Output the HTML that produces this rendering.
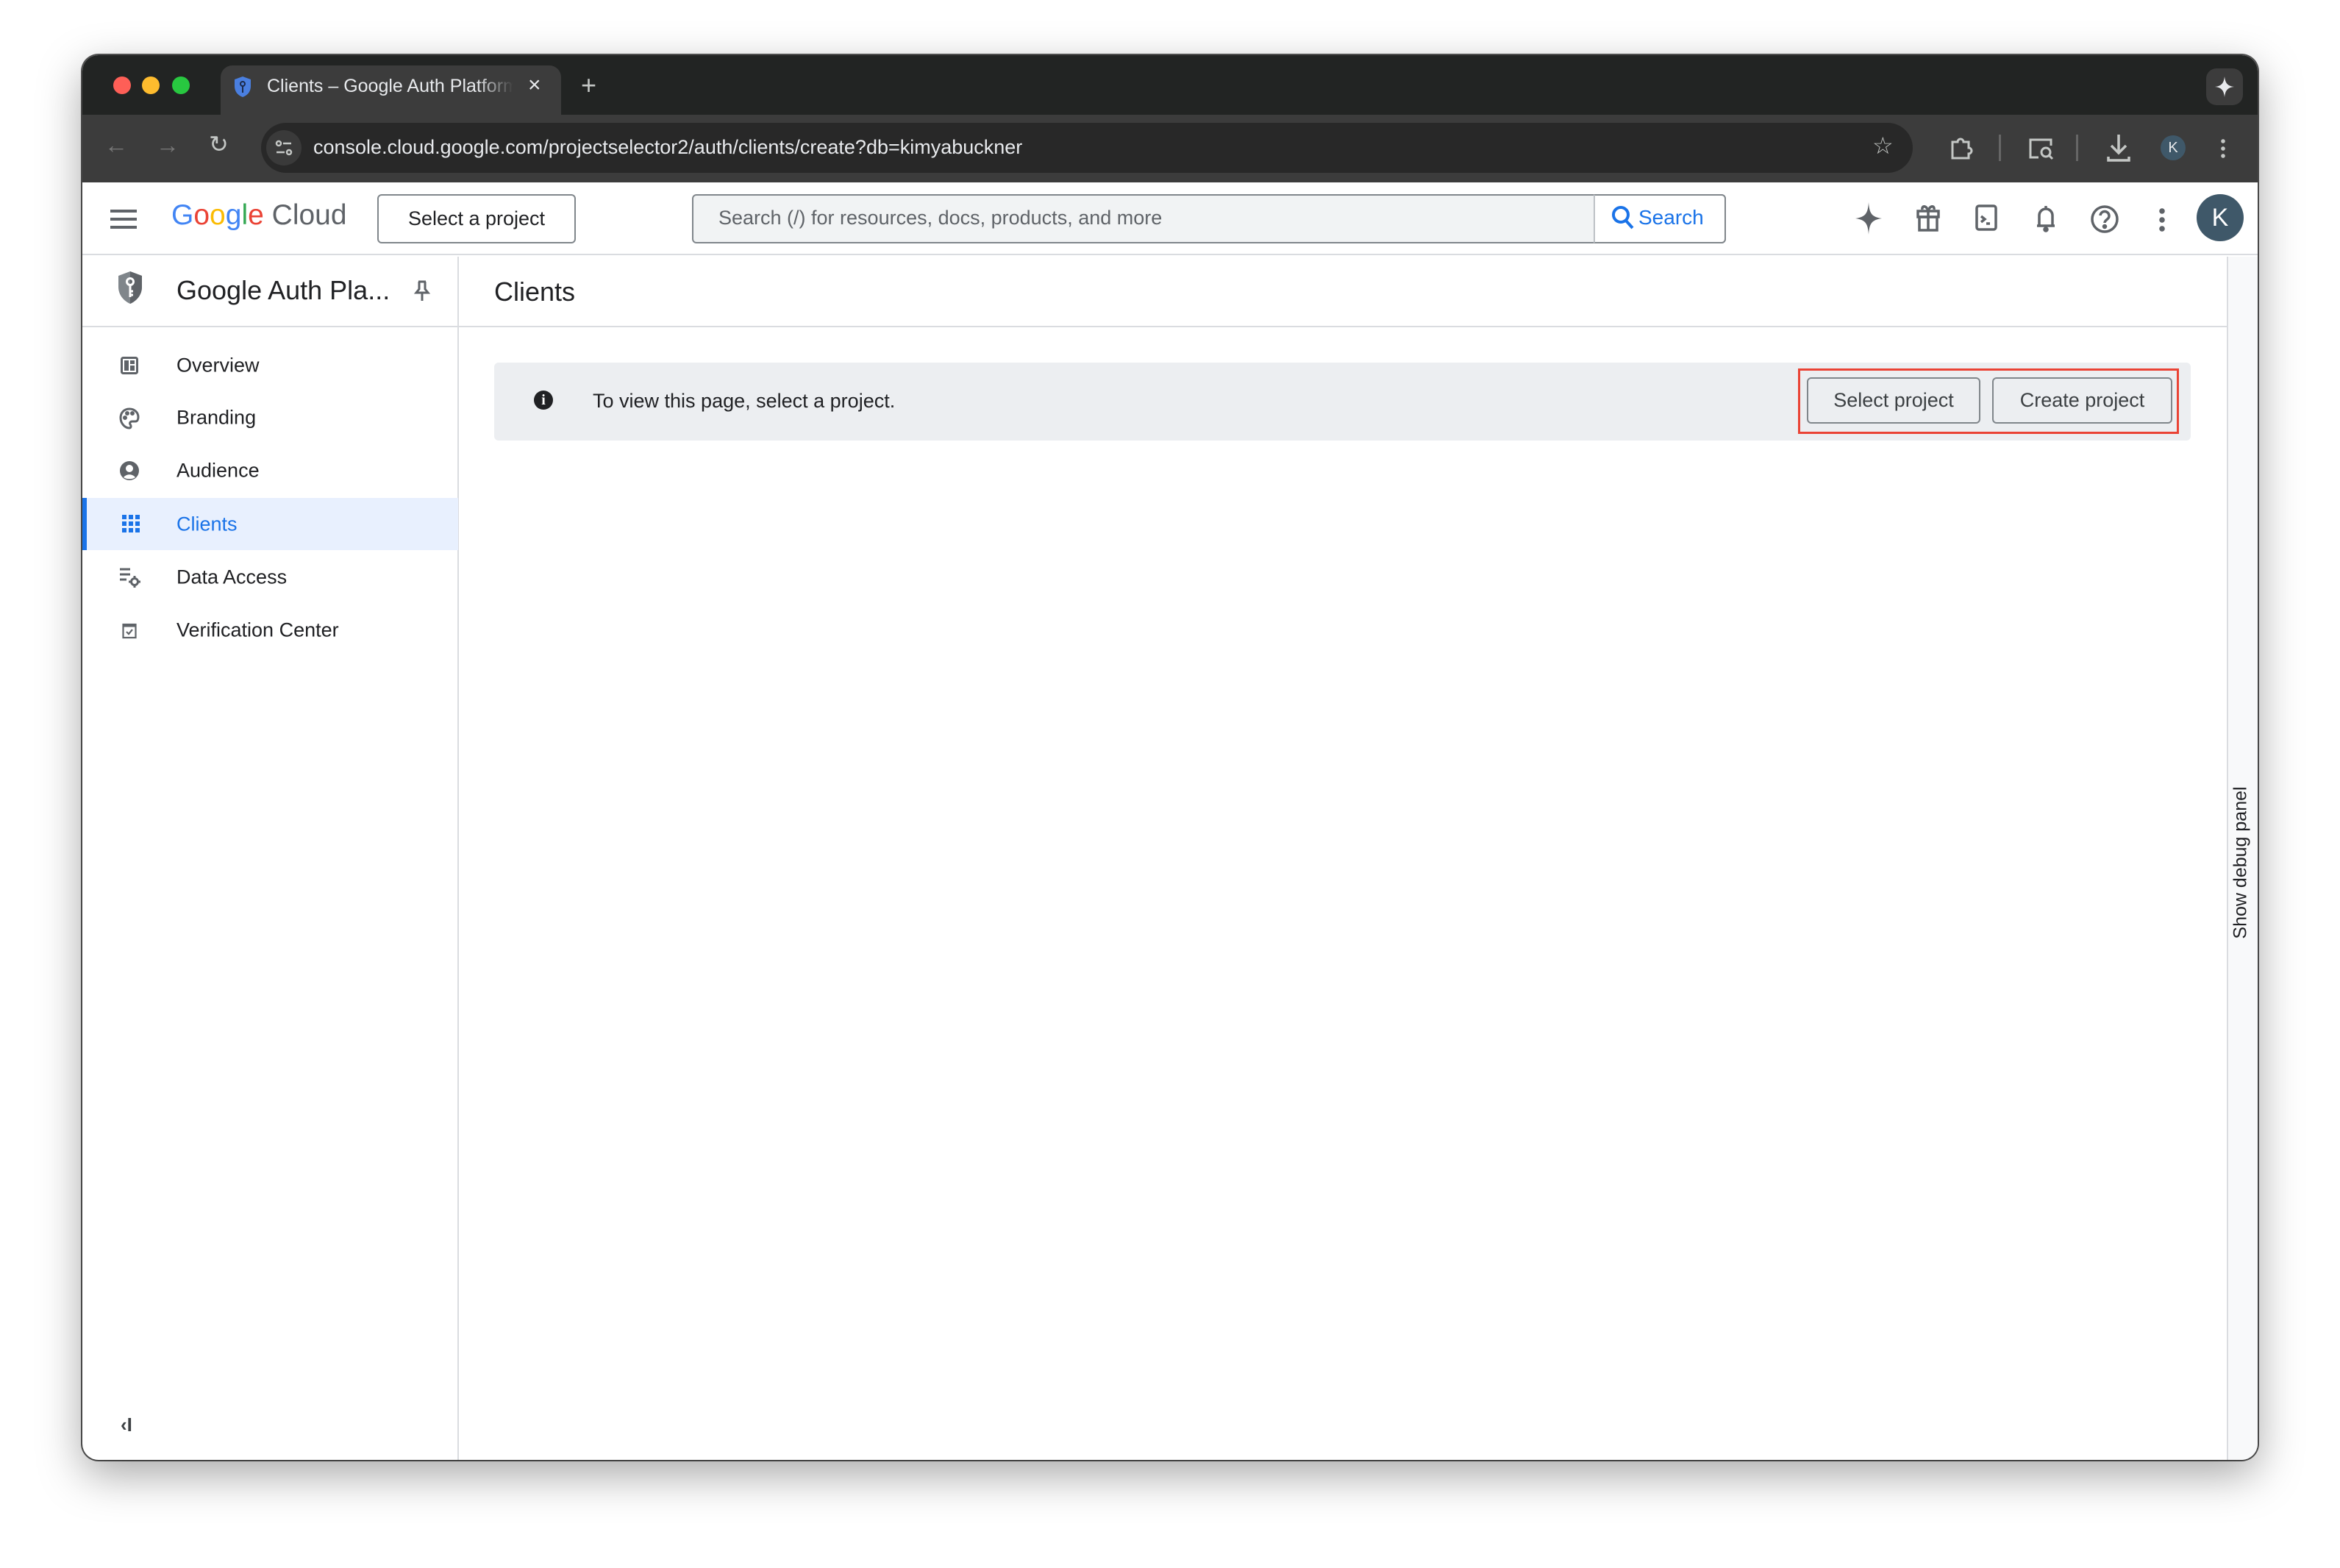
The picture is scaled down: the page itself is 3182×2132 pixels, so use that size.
<!DOCTYPE html>
<html><head><meta charset="utf-8"><style>
*{box-sizing:border-box;margin:0;padding:0}
body{width:3182px;height:2132px;background:#fff;font-family:"Liberation Sans",Arial,sans-serif;position:relative;overflow:hidden}
.abs{position:absolute}
.win{left:112px;top:75px;width:2958px;height:1910px;border-radius:22px;overflow:hidden;background:#fff;box-shadow:0 20px 60px rgba(0,0,0,.35),0 0 0 2px #555}
.t{white-space:nowrap}
svg{position:absolute;overflow:visible}
.nav{left:0;width:511px;height:71px}
.nav span{position:absolute;left:128px;top:50%;transform:translateY(-50%);font-size:27px;color:#202124}
</style></head><body>
<div class="abs win">
  <div class="abs" style="left:0;top:0;width:2958px;height:81px;background:#222423"></div>
  <div class="abs" style="left:42px;top:29px;width:24px;height:24px;border-radius:50%;background:#fe5f57"></div>
  <div class="abs" style="left:81px;top:29px;width:24px;height:24px;border-radius:50%;background:#febc2e"></div>
  <div class="abs" style="left:122px;top:29px;width:24px;height:24px;border-radius:50%;background:#28c840"></div>
  <div class="abs" style="left:188px;top:14px;width:463px;height:70px;background:#3c3c3c;border-radius:16px 16px 0 0"></div>
  <svg style="left:206px;top:28px" width="24" height="30" viewBox="0 0 24 30"><path d="M12 1 L23 5 V14 C23 22 18 27 12 29 C6 27 1 22 1 14 V5Z" fill="#4a7fe0"/><circle cx="12" cy="11" r="3" fill="none" stroke="#1c2a4a" stroke-width="2"/><path d="M12 14v9" stroke="#1c2a4a" stroke-width="2"/></svg>
  <div class="abs t" style="left:251px;top:28px;font-size:25px;color:#e8eaed;width:335px;overflow:hidden;-webkit-mask:linear-gradient(90deg,#000 85%,transparent)">Clients – Google Auth Platform</div>
  <div class="abs t" style="left:606px;top:24px;font-size:30px;color:#e8eaed">×</div>
  <div class="abs t" style="left:678px;top:20px;font-size:36px;color:#c4c7c5">+</div>
  <div class="abs" style="left:2888px;top:18px;width:50px;height:50px;border-radius:14px;background:#3c3c3c"></div>
  <svg style="left:2900px;top:29px" width="26" height="28" viewBox="0 0 26 28"><path d="M13 0 C14 9 17 13 26 14 C17 15 14 19 13 28 C12 19 9 15 0 14 C9 13 12 9 13 0Z" fill="#e8eaed"/></svg>
  <div class="abs" style="left:0;top:81px;width:2958px;height:92px;background:#3c3c3c"></div>
  <div class="abs t" style="left:30px;top:104px;font-size:32px;color:#777">←</div>
  <div class="abs t" style="left:100px;top:104px;font-size:32px;color:#777">→</div>
  <div class="abs t" style="left:172px;top:102px;font-size:32px;color:#c4c7c5">↻</div>
  <div class="abs" style="left:243px;top:92px;width:2246px;height:68px;border-radius:34px;background:#282828"></div>
  <div class="abs" style="left:250px;top:102px;width:48px;height:48px;border-radius:50%;background:#3a3a3a"></div>
  <svg style="left:262px;top:114px" width="24" height="24" viewBox="0 0 24 24" fill="none" stroke="#c4c7c5" stroke-width="2.5"><circle cx="5" cy="6" r="3"/><path d="M11 6h11M2 18h11"/><circle cx="19" cy="18" r="3"/></svg>
  <div class="abs t" style="left:314px;top:110px;font-size:27px;color:#e8eaed">console.cloud.google.com/projectselector2/auth/clients/create?db=kimyabuckner</div>
  <div class="abs t" style="left:2434px;top:104px;font-size:32px;color:#c4c7c5">☆</div>
  <svg style="left:2540px;top:110px" width="30" height="32" viewBox="0 0 30 32" fill="none" stroke="#c4c7c5" stroke-width="3"><path d="M3 8h7a4 4 0 018 0h7v8a4 4 0 010 8v6H3z"/></svg>
  <div class="abs" style="left:2606px;top:108px;width:3px;height:36px;background:#666"></div>
  <svg style="left:2646px;top:112px" width="36" height="32" viewBox="0 0 36 32" fill="none" stroke="#c4c7c5" stroke-width="3"><path d="M14 27H3V3h28v8"/><circle cx="24" cy="20" r="6"/><path d="M28 24l5 5"/></svg>
  <div class="abs" style="left:2711px;top:108px;width:3px;height:36px;background:#666"></div>
  <svg style="left:2752px;top:106px" width="34" height="40" viewBox="0 0 34 40" fill="none" stroke="#c4c7c5" stroke-width="3.5"><path d="M17 2v24M7 17l10 10 10-10M3 32v5h28v-5"/></svg>
  <div class="abs" style="left:2826px;top:109px;width:34px;height:34px;border-radius:50%;background:#3f5869;color:#e8eaed;font-size:20px;text-align:center;line-height:34px">K</div>
  <div class="abs" style="left:2908px;top:112px;width:6px;height:30px;background:radial-gradient(circle,#c4c7c5 2.5px,transparent 3px) 0 0/6px 10px"></div>
  <div class="abs" style="left:0;top:173px;width:2958px;height:99px;background:#fff;border-bottom:2px solid #dadce0"></div>
  <div class="abs" style="left:38px;top:210px;width:36px;height:26px;background:linear-gradient(#5f6368 0 4px,transparent 4px 11px,#5f6368 11px 15px,transparent 15px 22px,#5f6368 22px 26px)"></div>
  <div class="abs t" style="left:121px;top:196px;font-size:39px"><span style="color:#4285f4">G</span><span style="color:#ea4335">o</span><span style="color:#fbbc04">o</span><span style="color:#4285f4">g</span><span style="color:#34a853">l</span><span style="color:#ea4335">e</span><span style="color:#5f6368"> Cloud</span></div>
  <div class="abs t" style="left:401px;top:189px;width:270px;height:67px;border:2px solid #80868b;border-radius:6px;font-size:27px;color:#202124;text-align:center;line-height:63px">Select a project</div>
  <div class="abs" style="left:829px;top:189px;width:1406px;height:67px;border:2px solid #80868b;border-radius:6px;background:#f1f3f4"></div>
  <div class="abs t" style="left:865px;top:206px;font-size:27px;color:#5f6368">Search (/) for resources, docs, products, and more</div>
  <div class="abs" style="left:2055px;top:189px;width:180px;height:67px;border:2px solid #80868b;border-left:2px solid #bdc1c6;border-radius:0 6px 6px 0;background:#fff"></div>
  <svg style="left:2078px;top:203px" width="34" height="38" viewBox="0 0 34 38" fill="none" stroke="#1a73e8" stroke-width="4"><circle cx="14" cy="14" r="10"/><path d="M21 22l9 10"/></svg>
  <div class="abs t" style="left:2116px;top:205px;font-size:28px;color:#1a73e8">Search</div>
  <svg style="left:2411px;top:200px" width="36" height="44" viewBox="0 0 36 44"><path d="M18 0 C19 15 22 20 36 22 C22 24 19 29 18 44 C17 29 14 24 0 22 C14 20 17 15 18 0Z" fill="#5f6368"/></svg>
  <svg style="left:2494px;top:200px" width="32" height="40" viewBox="0 0 32 40" fill="none" stroke="#5f6368" stroke-width="3.5"><rect x="2" y="12" width="28" height="8"/><rect x="4" y="20" width="24" height="18"/><path d="M16 12v26M16 12c-2-8-9-8-8-2M16 12c2-8 9-8 8-2"/></svg>
  <svg style="left:2574px;top:203px" width="30" height="36" viewBox="0 0 30 36" fill="none" stroke="#5f6368" stroke-width="3.5"><rect x="2" y="2" width="26" height="32" rx="3"/><path d="M8 16l5 4-5 4M15 26h5"/></svg>
  <svg style="left:2655px;top:200px" width="30" height="42" viewBox="0 0 30 42" fill="none" stroke="#5f6368" stroke-width="3.5"><path d="M3 32h24M6 32V18a9 9 0 0118 0v14M15 5v4"/><circle cx="15" cy="37" r="2" fill="#5f6368"/></svg>
  <svg style="left:2730px;top:203px" width="40" height="40" viewBox="0 0 40 40" fill="none" stroke="#5f6368" stroke-width="3.5"><circle cx="20" cy="20" r="17"/><path d="M14 15a6 6 0 1112 1c0 4-6 5-6 9"/><circle cx="20" cy="30" r="1.5" fill="#5f6368"/></svg>
  <div class="abs" style="left:2824px;top:206px;width:8px;height:34px;background:radial-gradient(circle,#5f6368 3.5px,transparent 4px) 0 0/8px 12px"></div>
  <div class="abs" style="left:2875px;top:189px;width:64px;height:64px;border-radius:50%;background:#3f5869;color:#fff;font-size:34px;text-align:center;line-height:64px">K</div>
  <div class="abs" style="left:510px;top:274px;width:2px;height:1640px;background:#dadce0"></div>
  <svg style="left:48px;top:293px" width="34" height="46" viewBox="0 0 34 46"><path d="M17 1 L33 7 V22 C33 33 26 41 17 45 C8 41 1 33 1 22 V7Z" fill="#80868b"/><path d="M17 1 L33 7 V22 C33 33 26 41 17 45Z" fill="#5f6368"/><circle cx="17" cy="15" r="4.5" fill="none" stroke="#fff" stroke-width="3"/><path d="M17 20v16M17 28h4M17 33h4" stroke="#fff" stroke-width="3"/></svg>
  <div class="abs t" style="left:128px;top:299px;font-size:36px;color:#202124">Google Auth Pla...</div>
  <svg style="left:452px;top:306px" width="20" height="30" viewBox="0 0 20 30" fill="none" stroke="#5f6368" stroke-width="3"><path d="M5 2h10M6 2v10l-4 5h16l-4-5V2M10 17v11"/></svg>
  <div class="abs" style="left:0;top:368px;width:511px;height:2px;background:#dadce0"></div>
  <div class="abs" style="left:511px;top:368px;width:2405px;height:2px;background:#dadce0"></div>
  <div class="abs t" style="left:560px;top:301px;font-size:36px;color:#202124">Clients</div>

  <div class="abs nav" style="top:386px"><svg style="left:52px;top:24px" width="24" height="24" viewBox="0 0 24 24"><rect x="1.5" y="1.5" width="21" height="21" rx="2" fill="none" stroke="#5f6368" stroke-width="3"/><rect x="5" y="5" width="6" height="14" fill="#5f6368"/><rect x="13" y="5" width="6" height="5" fill="#5f6368"/><rect x="13" y="12" width="6" height="7" fill="#5f6368"/></svg><span>Overview</span></div>
  <div class="abs nav" style="top:457px"><svg style="left:50px;top:22px" width="28" height="30" viewBox="0 0 28 30" fill="none" stroke="#5f6368" stroke-width="3"><path d="M14 2C6 2 2 8 2 14c0 8 6 14 12 14 3 0 2-4 1-5-1-2 0-4 3-4h4c3 0 4-3 4-6C26 7 21 2 14 2z"/><circle cx="8" cy="14" r="1.5" fill="#5f6368"/><circle cx="11" cy="8" r="1.5" fill="#5f6368"/><circle cx="18" cy="8" r="1.5" fill="#5f6368"/></svg><span>Branding</span></div>
  <div class="abs nav" style="top:529px"><svg style="left:50px;top:22px" width="28" height="28" viewBox="0 0 28 28"><circle cx="14" cy="14" r="13" fill="#5f6368"/><circle cx="14" cy="11" r="5" fill="#fff"/><path d="M6 23c4-5 12-5 16 0c-4 3-12 3-16 0z" fill="#fff"/></svg><span>Audience</span></div>
  <div class="abs nav" style="top:602px;background:#e8f0fe"><div class="abs" style="left:0;top:0;width:6px;height:71px;background:#1a73e8"></div><div class="abs" style="left:54px;top:23px;width:24px;height:24px;background:repeating-linear-gradient(90deg,#1a73e8 0 6px,transparent 6px 9px);-webkit-mask:repeating-linear-gradient(#000 0 6px,transparent 6px 9px)"></div><span style="color:#1a73e8">Clients</span></div>
  <div class="abs nav" style="top:674px"><svg style="left:50px;top:22px" width="30" height="28" viewBox="0 0 30 28" fill="none" stroke="#5f6368" stroke-width="3"><path d="M1 3h14M1 10h14M1 17h9"/><circle cx="21" cy="20" r="4.5"/><path d="M21 12v3M21 25v3M13 20h3M26 20h3" /></svg><span>Data Access</span></div>
  <div class="abs nav" style="top:746px"><svg style="left:54px;top:26px" width="20" height="22" viewBox="0 0 20 22" fill="none" stroke="#5f6368" stroke-width="2.2"><rect x="1.5" y="2" width="17" height="18"/><path d="M1.5 4h17" stroke-width="3"/><path d="M6 12l3 3 5-6"/></svg><span>Verification Center</span></div>
  <div class="abs t" style="left:52px;top:1847px;font-size:26px;color:#3c4043;font-weight:bold">‹I</div>

  <div class="abs" style="left:560px;top:418px;width:2307px;height:106px;background:#eceef1;border-radius:6px"></div>
  <div class="abs" style="left:614px;top:456px;width:26px;height:26px;border-radius:50%;background:#202124;color:#fff;font-size:20px;font-weight:bold;text-align:center;line-height:26px;font-family:'Liberation Serif',serif">i</div>
  <div class="abs t" style="left:694px;top:455px;font-size:27px;color:#202124">To view this page, select a project.</div>
  <div class="abs" style="left:2333px;top:426px;width:518px;height:89px;border:3px solid #ea4335"></div>
  <div class="abs t" style="left:2345px;top:438px;width:236px;height:63px;border:2px solid #80868b;border-radius:6px;font-size:27px;color:#3c4043;text-align:center;line-height:59px">Select project</div>
  <div class="abs t" style="left:2597px;top:438px;width:245px;height:63px;border:2px solid #80868b;border-radius:6px;font-size:27px;color:#3c4043;text-align:center;line-height:59px">Create project</div>

  <div class="abs" style="left:2916px;top:274px;width:42px;height:1636px;background:#f8f9fa;border-left:2px solid #dadce0"></div>
  <div class="abs t" style="left:2935px;top:1098px;font-size:25px;color:#202124;transform:translate(-50%,-50%) rotate(-90deg);transform-origin:center">Show debug panel</div>
</div>
</body></html>
